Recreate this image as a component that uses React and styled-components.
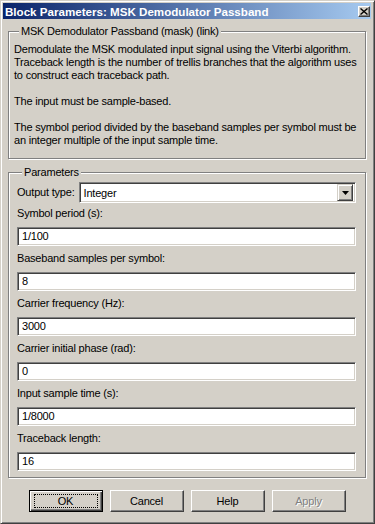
import styled, { createGlobalStyle } from "styled-components";

const GlobalStyle = createGlobalStyle`
    html, body {
        margin: 0;
        padding: 0;
        background: #d4d0c8;
    }
    * {
        box-sizing: border-box;
    }
`;

// description text, broken where the dialog breaks it
const description = [
    [
        "Demodulate the MSK modulated input signal using the Viterbi algorithm.",
        "Traceback length is the number of trellis branches that the algorithm uses",
        "to construct each traceback path.",
    ],
    ["The input must be sample-based."],
    [
        "The symbol period divided by the baseband samples per symbol must be",
        "an integer multiple of the input sample time.",
    ],
];

// parameter rows below the output type dropdown
const params = [
    { label: "Symbol period (s):", value: "1/100" },
    { label: "Baseband samples per symbol:", value: "8" },
    { label: "Carrier frequency (Hz):", value: "3000" },
    { label: "Carrier initial phase (rad):", value: "0" },
    { label: "Input sample time (s):", value: "1/8000" },
    { label: "Traceback length:", value: "16" },
];

function App() {
    const renderedText = description.map((lines, idx) => (
        <p key={idx}>
            {lines.map((line) => (
                <span key={line}>{line}</span>
            ))}
        </p>
    ));

    const renderedParams = params.map((p) => (
        <ParamItem key={p.label}>
            <Label>{p.label}</Label>
            <TextField>{p.value}</TextField>
        </ParamItem>
    ));

    return (
        <>
            <GlobalStyle />
            <Window>
                <TitleBar>
                    <Title>Block Parameters: MSK Demodulator Passband</Title>
                    <CloseButton>
                        <svg width="8" height="7" viewBox="0 0 8 7">
                            <path
                                d="M0.5 0.5 L7.5 6.5 M7.5 0.5 L0.5 6.5"
                                stroke="#000"
                                strokeWidth="1.4"
                            />
                        </svg>
                    </CloseButton>
                </TitleBar>
                <Body>
                    <GroupBox>
                        <Legend>MSK Demodulator Passband (mask) (link)</Legend>
                        <Description>{renderedText}</Description>
                    </GroupBox>
                    <GroupBox $params>
                        <Legend>Parameters</Legend>
                        <SelectRow>
                            <Label>Output type:</Label>
                            <SelectBox>
                                <span>Integer</span>
                                <DropButton>
                                    <svg width="7" height="4" viewBox="0 0 7 4">
                                        <path d="M0 0 H7 L3.5 4 Z" fill="#000" />
                                    </svg>
                                </DropButton>
                            </SelectBox>
                        </SelectRow>
                        <ParamList>{renderedParams}</ParamList>
                    </GroupBox>
                    <ButtonRow>
                        <Button $default>OK</Button>
                        <Button>Cancel</Button>
                        <Button>Help</Button>
                        <Button $disabled>Apply</Button>
                    </ButtonRow>
                </Body>
            </Window>
        </>
    );
}

const Window = styled.div`
    width: 375px;
    height: 524px;
    display: flex;
    flex-direction: column;
    padding: 2px 3px 3px 2px;
    background: #d4d0c8;
    border: 1px solid;
    border-color: #d4d0c8 #404040 #404040 #d4d0c8;
    box-shadow: inset 1px 1px #fff, inset -1px -1px #808080;
    font-family: "Liberation Sans", Arial, sans-serif;
    font-size: 11px;
    letter-spacing: -0.2px;
    color: #000;
`;

const TitleBar = styled.div`
    height: 16px;
    display: flex;
    align-items: center;
    justify-content: space-between;
    padding: 0 1px 0 2px;
    background: linear-gradient(to right, #0a246a, #a6caf0);
`;

const Title = styled.span`
    color: #fff;
    font-weight: bold;
    font-size: 11.6px;
    letter-spacing: 0;
    white-space: nowrap;
`;

const CloseButton = styled.div`
    width: 12px;
    height: 11px;
    display: flex;
    align-items: center;
    justify-content: center;
    background: #d4d0c8;
    border: 1px solid;
    border-color: #fff #404040 #404040 #fff;
    box-shadow: inset -1px -1px #808080;
`;

const Body = styled.div`
    flex: 1;
    display: flex;
    flex-direction: column;
    padding: 6px 5px 0 5px;
`;

const GroupBox = styled.fieldset`
    margin: 0 0 ${(p) => (p.$params ? "0" : "7px")} 0;
    padding: ${(p) => (p.$params ? "3px 9px 6px 8px" : "5px 5px 11px 5px")};
    min-width: 0;
    border: 1px solid #808080;
    box-shadow: inset 1px 1px #fff, 1px 1px #fff;
`;

const Legend = styled.legend`
    padding: 0 2px;
    margin-left: 5px;
    line-height: 13px;
    background: #d4d0c8;
`;

const Description = styled.div`
    line-height: 13px;
    white-space: nowrap;
    p {
        margin: 0 0 13px 0;
    }
    p:last-child {
        margin-bottom: 0;
    }
    span {
        display: block;
    }
`;

const Label = styled.div`
    line-height: 13px;
    white-space: nowrap;
`;

const SelectRow = styled.div`
    display: flex;
    align-items: center;
    gap: 4px;
    margin-bottom: 4px;
`;

const sunken = `
    border: 1px solid;
    border-color: #808080 #fff #fff #808080;
    box-shadow: inset 1px 1px #404040, inset -1px -1px #d4d0c8;
    background: #fff;
`;

const SelectBox = styled.div`
    ${sunken}
    flex: 1;
    height: 21px;
    display: flex;
    align-items: center;
    justify-content: space-between;
    padding: 2px 2px 2px 4px;
`;

const DropButton = styled.div`
    width: 16px;
    height: 17px;
    display: flex;
    align-items: center;
    justify-content: center;
    background: #d4d0c8;
    border: 1px solid;
    border-color: #d4d0c8 #404040 #404040 #d4d0c8;
    box-shadow: inset 1px 1px #fff, inset -1px -1px #808080;
`;

const ParamList = styled.div`
    display: flex;
    flex-direction: column;
    gap: 6px;
`;

const ParamItem = styled.div`
    display: flex;
    flex-direction: column;
    gap: 7px;
`;

const TextField = styled.div`
    ${sunken}
    height: 19px;
    display: flex;
    align-items: center;
    padding: 0 4px;
    line-height: 13px;
`;

const ButtonRow = styled.div`
    display: flex;
    justify-content: center;
    gap: 7px;
    margin-top: 12px;
`;

const Button = styled.div`
    position: relative;
    width: 74px;
    height: 22px;
    display: flex;
    align-items: center;
    justify-content: center;
    background: #d4d0c8;
    border: 1px solid;
    border-color: ${(p) =>
        p.$default ? "#000" : "#fff #404040 #404040 #fff"};
    box-shadow: ${(p) =>
        p.$default
            ? "inset 1px 1px #fff, inset -1px -1px #404040, inset -2px -2px #808080"
            : "inset -1px -1px #808080"};
    color: ${(p) => (p.$disabled ? "#808080" : "#000")};
    text-shadow: ${(p) => (p.$disabled ? "1px 1px #fff" : "none")};

    &::after {
        content: "";
        display: ${(p) => (p.$default ? "block" : "none")};
        position: absolute;
        inset: 3px 4px;
        border: 1px dotted #000;
    }
`;

export default App;
